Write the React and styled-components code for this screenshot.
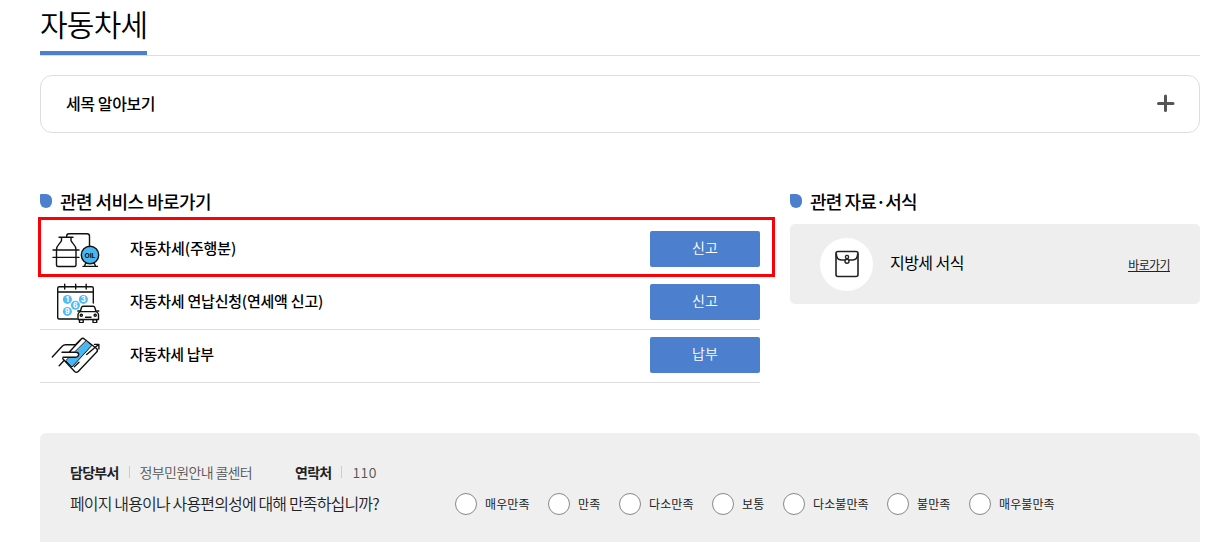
import React from "react";
import styled, { createGlobalStyle } from "styled-components";

const Global = createGlobalStyle`
  * { box-sizing: border-box; }
  html, body { margin: 0; height: 100%; overflow: hidden; background: #fff; }
  body { font-family: "Noto Sans CJK KR", "Noto Sans", sans-serif; color: #000; }
  h1, h2, p, ul, dl, dt, dd { margin: 0; padding: 0; }
  ul { list-style: none; }
  button { font-family: inherit; }
`;

const Page = styled.main`
  width: 1160px;
  height: 542px;
  margin-left: 40px;
  display: flex;
  flex-direction: column;
`;

const TitleBar = styled.header`
  display: flex;
  height: 56px;
  flex: none;
  border-bottom: 1px solid #ddd;
`;

const Title = styled.h1`
  width: 107px;
  height: 55px;
  padding-top: 3px;
  border-bottom: 4px solid #4d7fcf;
  font-size: 30px;
  line-height: 40px;
  font-weight: 350;
  letter-spacing: -0.75px;
  white-space: nowrap;
`;

const Accordion = styled.button`
  display: flex;
  flex: none;
  align-items: center;
  justify-content: space-between;
  height: 58px;
  margin-top: 19px;
  padding: 0 24px 2px 25px;
  border: 1px solid #ddd;
  border-radius: 12px;
  background: #fff;
  color: #000;
  font-size: 16px;
  font-weight: 500;
  letter-spacing: -0.4px;
`;

const Columns = styled.div`
  display: grid;
  flex: none;
  grid-template-columns: 720px 410px;
  column-gap: 30px;
  margin-top: 57px;
  height: 193px;
`;

const Heading = styled.h2`
  display: flex;
  align-items: center;
  gap: 8px;
  height: 24px;
  padding-bottom: 2px;
  font-size: 18px;
  font-weight: 500;
  line-height: 22px;
  letter-spacing: ${(p) => p.$spacing ?? -0.55}px;

  &::before {
    content: "";
    width: 12px;
    height: 14px;
    border-radius: 1px 6px 6px 6px;
    background: #4d7fcf;
  }
`;

const ServiceList = styled.ul`
  position: relative;
  margin-top: 10px;
`;

const Highlight = styled.li`
  position: absolute;
  inset: -7px -15px auto -2px;
  height: 60px;
  border: 3px solid #fb0007;
  pointer-events: none;
`;

const ServiceRow = styled.li`
  display: flex;
  align-items: center;
  height: 53px;
  padding-bottom: 2px;
  border-bottom: 1px solid #ddd;

  & > svg { margin: 0 30px 0 10px; flex: none; }
`;

const ServiceName = styled.span`
  flex: 1;
  padding-bottom: 4px;
  font-size: 15px;
  font-weight: 500;
  letter-spacing: ${(p) => p.$spacing}px;
`;

const ActionButton = styled.button`
  width: 110px;
  height: 36px;
  padding: 0 0 4px;
  border: 0;
  border-radius: 2px;
  background: #4d7fcf;
  color: #fff;
  font-size: 14px;
  font-weight: 350;
`;

const FormCard = styled.div`
  display: flex;
  align-items: center;
  height: 80px;
  margin-top: 10px;
  padding: 0 30px;
  border-radius: 5px;
  background: #eee;
`;

const Circle = styled.span`
  display: grid;
  place-items: center;
  width: 53px;
  height: 53px;
  margin-right: 17px;
  border-radius: 50%;
  background: #fff;
`;

const FormName = styled.span`
  flex: 1;
  padding-bottom: 5px;
  font-size: 16px;
  letter-spacing: -0.55px;
`;

const ShortcutLink = styled.a`
  height: 15px;
  border-bottom: 1px solid #222;
  color: #222;
  font-size: 12px;
  font-weight: 400;
  line-height: 15px;
  letter-spacing: -0.6px;
`;

const Footer = styled.footer`
  flex: none;
  height: 109px;
  margin-top: 50px;
  padding: 28px 30px 0;
  border-radius: 6px 6px 0 0;
  background: #efefef;
`;

const Contact = styled.dl`
  display: flex;
  gap: 43px;
  height: 22px;
  font-size: 14px;
`;

const ContactItem = styled.div`
  display: flex;
  align-items: center;

  dt {
    color: #222;
    font-weight: 700;
    letter-spacing: -0.75px;
  }

  dd {
    margin-left: 10px;
    padding: 0 0 1px 11px;
    background: linear-gradient(#ccc, #ccc) 0 50% / 1px 12px no-repeat;
    color: #555;
    font-weight: 350;
    letter-spacing: ${(p) => p.$spacing}px;
  }
`;

const Survey = styled.div`
  display: flex;
  align-items: center;
  height: 41px;
`;

const Question = styled.p`
  width: 385px;
  padding-bottom: 1px;
  color: #222;
  font-size: 16px;
  font-weight: 350;
  letter-spacing: -0.85px;
  white-space: nowrap;
`;

const Choice = styled.label`
  display: flex;
  align-items: center;
  gap: 8px;
  width: ${(p) => p.$width}px;
  flex: none;
  color: #222;
  font-size: 12px;
  letter-spacing: 0.1px;
  white-space: nowrap;

  input {
    appearance: none;
    flex: none;
    width: 22px;
    height: 22px;
    margin: 0;
    border: 1px solid #888;
    border-radius: 50%;
    background: #fff;
  }
`;

const ServiceSvg = styled.svg.attrs({
  width: 50,
  height: 42,
  viewBox: "0 -2 50 42",
  fill: "none",
  stroke: "#111",
  strokeWidth: 1.4,
  strokeLinecap: "round",
  strokeLinejoin: "round",
})``;

const TankIcon = () => (
  <ServiceSvg>
    <path d="M9 7.300h14M11.500 7.500v3c-1 3-5 4.500-5 9v15.500q0 1.500 1.500 1.500h16.500q1.500 0 1.500-1.500V19.500c0-4.500-4-6-5-9v-3M16.700 7V6q0-2.300 2.300-2.300h18q2.500 0 2.500 2.500V16M3 20h26M3 27.400h26" />
    <path d="M36 32.500l-1.500 3.500M44 32.500l1.500 3.500M33 36.400h14.500" />
    <circle cx="40" cy="25" r="8.700" fill="#48b8f2" />
    <text x="39.900" y="27.500" textAnchor="middle" fill="#111" stroke="none" fontFamily="Inter, sans-serif" fontSize="6.800" fontWeight="700">OIL</text>
  </ServiceSvg>
);

const CalendarIcon = () => (
  <ServiceSvg>
    <path d="M27 36H9.200q-1.500 0-1.500-1.500V5.200q0-1.500 1.500-1.500h32.600q1.500 0 1.500 1.500V20M7.700 9h35.600M14.700 1.300v4.800M25.700 1.300v4.800M36.200 1.300v4.800" />
    <g fill="#4fbcf6" stroke="none">
      <circle cx="17.400" cy="16.400" r="4.500" />
      <circle cx="33.400" cy="16.400" r="4.500" />
      <circle cx="25.400" cy="22.300" r="4.500" />
      <circle cx="17.400" cy="28.400" r="4.500" />
    </g>
    <g fill="#fff" stroke="none" fontFamily="Inter, sans-serif" fontSize="7" fontWeight="800" textAnchor="middle">
      <text x="17.400" y="18.900">1</text>
      <text x="33.400" y="18.900">3</text>
      <text x="25.400" y="24.800">6</text>
      <text x="17.400" y="30.900">9</text>
    </g>
    <path fill="#fff" d="M29.500 36.500v2.500q0 .7.700.7h2.300q.7 0 .7-.7v-2.500zM43 36.500v2.500q0 .7.700.7h2.300q.7 0 .7-.7v-2.500z" />
    <path fill="#fff" d="M28 36.500V31.500q0-1.700 2.300-3l1.200-4q.4-1.200 1.500-1.200h10.300q1.100 0 1.500 1.200l1.200 4q2.500 1.300 2.500 3v5z" />
    <path d="M30.300 28.600h15.700M27.800 28h2M46.800 28h2M35.500 34.200h5.500" />
    <circle cx="31.300" cy="32.300" r="1.100" />
    <circle cx="45.200" cy="32.300" r="1.100" />
  </ServiceSvg>
);

const CardIcon = () => (
  <ServiceSvg>
    <path fill="#fff" d="M13 21L31 3.200q1.800-1.800 3.600 0L46.500 12.500q1.800 1.700.2 3.600L28.200 35.400q-1.800 1.800-3.600 0L13 23q-.8-1 0-2z" />
    <path fill="#48b8f2" strokeWidth="1" d="M36.500 4.800L41.800 9.500 22 31 16 25z" />
    <path fill="#fff" stroke="none" d="M3 21L14 8.800h11.500L20.500 15.800h6q2 1 2 3t-2 2.500H14L9.500 23z" />
    <path d="M2.300 21L12.200 10.300q1.300-1.500 3.500-1.500h9.500M30 4.500L19.300 16M12 16.200h14q2.500.2 2.700 2-.3 3.100-3.700 3.100H13M36.700 18.500L48.500 8.500M44.500 8.400h4.400v4.500M14 24.500L9.200 29.700M24.300 30.700l4.700-4.400" />
  </ServiceSvg>
);

const EnvelopeIcon = () => (
  <svg width="24" height="28" viewBox="0 0 24 28" fill="none" stroke="#222" strokeWidth="1.600" strokeLinejoin="round">
    <rect x="1" y="1.500" width="22" height="25" rx="2" />
    <path d="M1.300 3.500q0 6.500 5 6.500h11.400q5 0 5-6.500" />
    <circle cx="12" cy="7" r="1.600" strokeWidth="1.400" />
    <circle cx="12" cy="11.300" r="2" fill="#fff" strokeWidth="1.400" />
  </svg>
);

const PlusIcon = () => (
  <svg width="18" height="18" viewBox="0 0 18 18" stroke="#555" strokeWidth="3" strokeLinecap="round">
    <path d="M8.500 2v14.500M1.500 9.500h14.500" />
  </svg>
);

const services = [
  { name: "자동차세(주행분)", action: "신고", spacing: -0.12, Icon: TankIcon },
  { name: "자동차세 연납신청(연세액 신고)", action: "신고", spacing: -0.22, Icon: CalendarIcon },
  { name: "자동차세 납부", action: "납부", spacing: -0.35, Icon: CardIcon },
];

const choices = [
  ["매우만족", 93],
  ["만족", 71],
  ["다소만족", 93],
  ["보통", 71],
  ["다소불만족", 104],
  ["불만족", 82],
  ["매우불만족", 100],
];

export default function App() {
  return (
    <>
      <Global />
      <Page>
        <TitleBar>
          <Title>자동차세</Title>
        </TitleBar>
        <Accordion>
          <span>세목 알아보기</span>
          <PlusIcon />
        </Accordion>
        <Columns>
          <section>
            <Heading>관련 서비스 바로가기</Heading>
            <ServiceList>
              {services.map(({ name, action, spacing, Icon }) => (
                <ServiceRow key={name}>
                  <Icon />
                  <ServiceName $spacing={spacing}>{name}</ServiceName>
                  <ActionButton>{action}</ActionButton>
                </ServiceRow>
              ))}
              <Highlight aria-hidden="true" />
            </ServiceList>
          </section>
          <section>
            <Heading $spacing={-0.9}>관련 자료·서식</Heading>
            <FormCard>
              <Circle><EnvelopeIcon /></Circle>
              <FormName>지방세 서식</FormName>
              <ShortcutLink>바로가기</ShortcutLink>
            </FormCard>
          </section>
        </Columns>
        <Footer>
          <Contact>
            <ContactItem $spacing={-0.65}>
              <dt>담당부서</dt>
              <dd>정부민원안내 콜센터</dd>
            </ContactItem>
            <ContactItem $spacing={0.4}>
              <dt>연락처</dt>
              <dd>110</dd>
            </ContactItem>
          </Contact>
          <Survey>
            <Question>페이지 내용이나 사용편의성에 대해 만족하십니까?</Question>
            {choices.map(([name, width]) => (
              <Choice key={name} $width={width}>
                <input type="radio" name="satisfaction" />
                {name}
              </Choice>
            ))}
          </Survey>
        </Footer>
      </Page>
    </>
  );
}
